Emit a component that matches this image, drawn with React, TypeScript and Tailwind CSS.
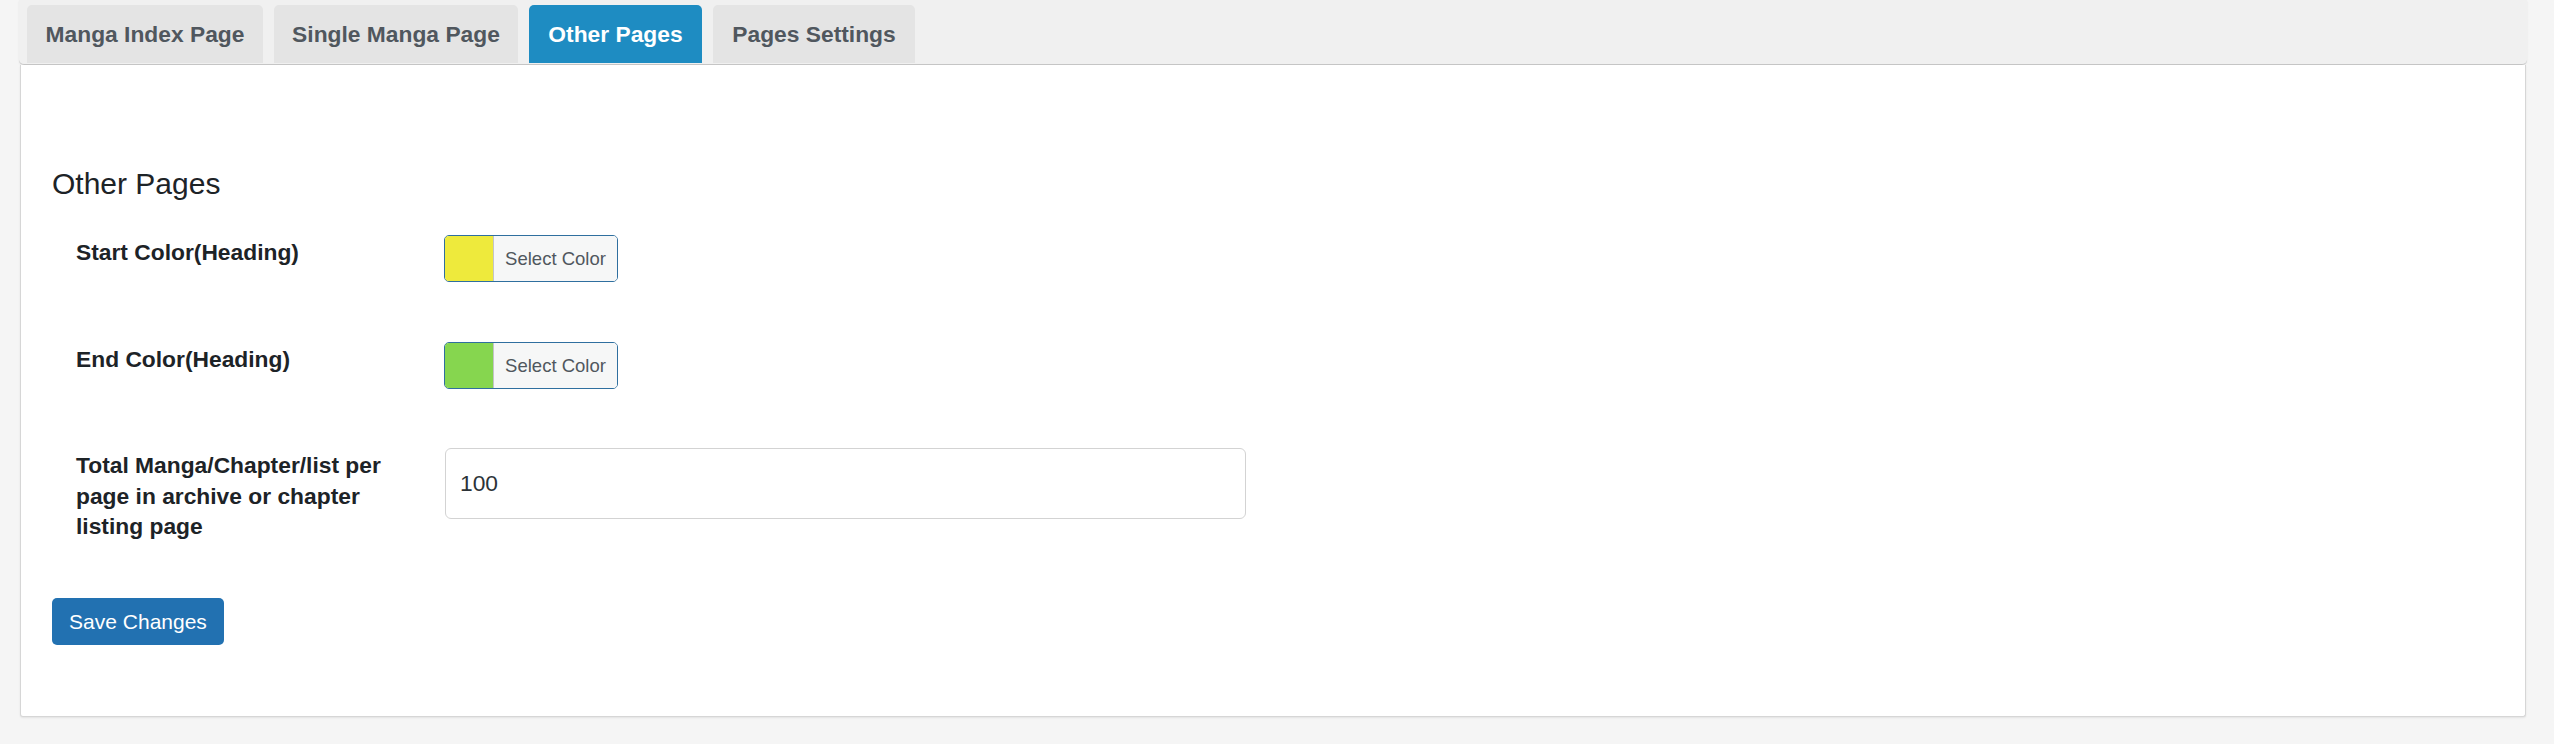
import React from "react";

const tabs = [
  { label: "Manga Index Page", w: "w-[236px]", active: false },
  { label: "Single Manga Page", w: "w-[244px]", active: false },
  { label: "Other Pages", w: "w-[173px]", active: true },
  { label: "Pages Settings", w: "w-[202px]", active: false },
];

function ColorPicker({ swatch }: { swatch: string }) {
  return (
    <div className="flex h-[47px] w-[174px] overflow-hidden rounded-[5px] border border-[#2f6f9f]">
      <div className={`h-full w-[48px] ${swatch}`} />
      <div className="flex h-full flex-1 items-center justify-center border-l border-[#c3c4c7] bg-[#f6f7f7] text-[18.5px] text-[#50575e]">
        Select Color
      </div>
    </div>
  );
}

function Row({ label, children }: { label: string; children: React.ReactNode }) {
  return (
    <div className="flex items-start">
      <div className="ml-[24px] w-[326px] pt-[2px] text-[22.8px] font-bold leading-[30.6px] text-[#1d2327]">
        {label}
      </div>
      <div className="ml-[42px]">{children}</div>
    </div>
  );
}

export default function App() {
  return (
    <div
      className="min-h-[744px] w-full bg-[#f5f5f5]"
      style={{ fontFamily: '"Liberation Sans", Arial, sans-serif' }}
    >
      <div className="ml-[19px] mr-[27px]">
        <div className="flex h-[65px] items-end gap-[11px] rounded-b-[5px] border-b border-[#c6c6c6] bg-[#f0f0f0] pl-[8px] shadow-[0_1px_2px_rgba(0,0,0,0.08)]">
          {tabs.map((t) => (
            <div
              key={t.label}
              className={`mb-[1px] flex h-[58px] ${t.w} items-center justify-center rounded-t-[5px] text-[22.8px] font-bold ${
                t.active ? "bg-[#1e8cc2] text-white" : "bg-[#e4e4e4] text-[#50575e]"
              }`}
            >
              {t.label}
            </div>
          ))}
        </div>
        <div className="mx-[1px] h-[652px] rounded-b-[3px] border border-t-0 border-[#d6d6d6] bg-white pl-[31px] pt-[99px] shadow-[0_1px_2px_rgba(0,0,0,0.08)]">
          <h2 className="text-[30px] font-normal leading-[39px] text-[#1d2327]">Other Pages</h2>
          <div className="mt-[32px] flex flex-col">
            <Row label="Start Color(Heading)">
              <ColorPicker swatch="bg-[#eeea3c]" />
            </Row>
            <div className="mt-[60px]">
              <Row label="End Color(Heading)">
                <ColorPicker swatch="bg-[#86d64f]" />
              </Row>
            </div>
            <div className="mt-[59px]">
              <Row label="Total Manga/Chapter/list per page in archive or chapter listing page">
                <div className="ml-[1px] flex h-[71px] w-[801px] items-center rounded-[6px] border border-[#d3d3d3] bg-white pl-[14px] text-[22.8px] text-[#2c3338]">
                  100
                </div>
              </Row>
            </div>
            <div className="mt-[56px]">
              <button className="flex h-[47px] w-[172px] items-center justify-center rounded-[5px] bg-[#2271b1] text-[21px] text-white">
                Save Changes
              </button>
            </div>
          </div>
        </div>
      </div>
    </div>
  );
}
